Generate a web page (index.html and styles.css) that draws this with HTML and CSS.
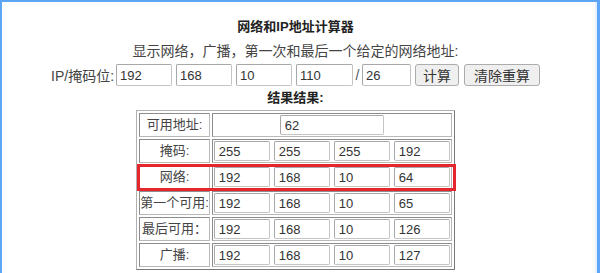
FILE: index.html
```html
<!DOCTYPE html>
<html>
  <head>
    <meta charset="UTF-8">
    <title>网络和IP地址计算器</title>
    <link rel="stylesheet" href="styles.css">
  </head>
<body>
<div class="frame">
	<div class="page">
		<h1 class="title">网络和IP地址计算器</h1>
		<p class="hint">显示网络，广播，第一次和最后一个给定的网络地址:</p>
		<form class="query">
			<label class="query-label">IP/掩码位:</label>
			<input type="text" class="field" value="192">
			<input type="text" class="field" value="168">
			<input type="text" class="field" value="10">
			<input type="text" class="field wide" value="110">
			<span class="slash">/</span>
			<input type="text" class="field mask" value="26">
			<button type="button" class="btn">计算</button>
			<button type="button" class="btn">清除重算</button>
		</form>
		<h2 class="result-title">结果结果:</h2>
		<div class="result-wrap">
			<table class="result">
				<tr>
					<td class="name">可用地址:</td>
					<td class="vals"><div class="quad single"><input type="text" class="cell-in count" value="62"></div></td>
				</tr>
				<tr>
					<td class="name">掩码:</td>
					<td class="vals"><div class="quad">
						<input type="text" class="cell-in" value="255">
						<input type="text" class="cell-in" value="255">
						<input type="text" class="cell-in" value="255">
						<input type="text" class="cell-in" value="192">
					</div></td>
				</tr>
				<tr>
					<td class="name">网络:</td>
					<td class="vals"><div class="quad">
						<input type="text" class="cell-in" value="192">
						<input type="text" class="cell-in" value="168">
						<input type="text" class="cell-in" value="10">
						<input type="text" class="cell-in" value="64">
					</div></td>
				</tr>
				<tr>
					<td class="name">第一个可用:</td>
					<td class="vals"><div class="quad">
						<input type="text" class="cell-in" value="192">
						<input type="text" class="cell-in" value="168">
						<input type="text" class="cell-in" value="10">
						<input type="text" class="cell-in" value="65">
					</div></td>
				</tr>
				<tr>
					<td class="name">最后可用：</td>
					<td class="vals"><div class="quad">
						<input type="text" class="cell-in" value="192">
						<input type="text" class="cell-in" value="168">
						<input type="text" class="cell-in" value="10">
						<input type="text" class="cell-in" value="126">
					</div></td>
				</tr>
				<tr>
					<td class="name">广播:</td>
					<td class="vals"><div class="quad">
						<input type="text" class="cell-in" value="192">
						<input type="text" class="cell-in" value="168">
						<input type="text" class="cell-in" value="10">
						<input type="text" class="cell-in" value="127">
					</div></td>
				</tr>
			</table>
			<div class="mark"></div>
		</div>
	</div>
</div>
</body>
</html>
```

FILE: styles.css
```css
body{
	margin:0;
	font-family:"Liberation Sans","Noto Sans CJK SC",sans-serif;
	color:#333;
}
.frame{
	min-height:100vh;
	box-sizing:border-box;
	border:2px solid #5da5f6;
	border-right-width:3px;
	border-bottom:none;
	box-shadow:inset -2px 0 0 #e6f0fd;
}
.page{
	padding-right:8px;
	padding-top:15px;
	text-align:center;
}
.title{
	margin:0;
	font-size:13px;
	line-height:20px;
	color:#222;
}
.hint{
	margin:4px 0 0;
	font-size:14px;
	line-height:20px;
	color:#444;
}
.query{
	margin:3px 0 0;
	display:flex;
	justify-content:center;
	align-items:center;
	gap:4px;
	height:22px;
}
.query-label{
	font-size:14px;
	color:#444;
	margin-right:-2px;
}
.field,.cell-in{
	box-sizing:border-box;
	margin:0;
	border:1px solid #c4c4c4;
	border-top-color:#a8a8a8;
	border-left-color:#a8a8a8;
	border-radius:2px;
	font-family:"Liberation Sans",sans-serif;
	font-size:13px;
	color:#333;
	background:#fff;
}
.field{
	width:56px;
	height:22px;
	padding:0 3px;
}
.field.wide{
	width:57px;
}
.field.mask{
	width:49px;
}
.slash{
	font-size:14px;
	color:#555;
	margin:0 -1.5px;
}
.btn{
	box-sizing:border-box;
	height:22px;
	margin:0;
	padding:0 7px;
	border:1px solid #acacac;
	border-radius:3px;
	background:#efefef;
	font-family:"Liberation Sans","Noto Sans CJK SC",sans-serif;
	font-size:14px;
	color:#333;
}
.btn + .btn{
	margin-left:1px;
	padding:0 9px;
}
.result-title{
	margin:2px 0 0;
	font-size:13px;
	line-height:20px;
	color:#222;
}
.result-wrap{
	position:relative;
	width:fit-content;
	margin:2px auto 0;
}
.result{
	border-collapse:separate;
	border-spacing:2px;
	border:1px solid #b0b0b0;
	border-right-color:#7a7a7a;
	border-bottom-color:#7a7a7a;
}
.result td{
	border:1px solid #8c8c8c;
	border-right-color:#b8b8b8;
	border-bottom-color:#b8b8b8;
	padding:1px;
	line-height:20px;
}
.name{
	width:67px;
	text-align:center;
	font-size:13px;
	color:#444;
	white-space:nowrap;
}
.result td.name{
	padding:0;
}
.quad{
	display:flex;
	gap:4px;
}
.quad.single{
	justify-content:center;
}
.cell-in{
	width:56px;
	height:20px;
	padding:0 4px;
}
.cell-in.count{
	width:104px;
}
.mark{
	position:absolute;
	left:1px;
	right:-1px;
	top:54px;
	height:27px;
	box-sizing:border-box;
	border:3px solid #e6262f;
	pointer-events:none;
}
```
